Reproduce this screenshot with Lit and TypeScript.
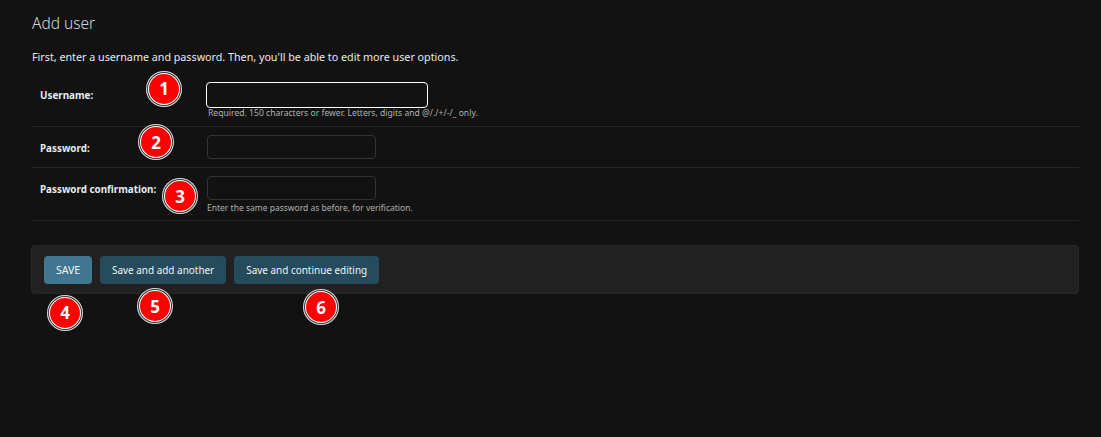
import { LitElement, html, css } from "lit";
import { customElement } from "lit/decorators.js";

const badges = [
  { n: 1, x: 164, y: 88.5 },
  { n: 2, x: 156, y: 142 },
  { n: 3, x: 180, y: 196 },
  { n: 4, x: 65, y: 312.5 },
  { n: 5, x: 155, y: 306 },
  { n: 6, x: 321, y: 307 },
];

@customElement("app-root")
export class AppRoot extends LitElement {
  static styles = css`
    :host {
      display: block;
      position: relative;
      height: 437px;
      overflow: hidden;
      background: #121212;
      color: #f5f5f5;
      font-family: "Noto Sans", "Open Sans", sans-serif;
      font-size: 11px;
    }
    .content {
      padding: 13px 22px 0 31px;
    }
    h1 {
      margin: 0 0 0 1px;
      font-size: 15.5px;
      line-height: 20px;
      font-weight: 300;
      color: #cfd8dc;
    }
    .intro {
      margin: 16px 0 0;
      padding-left: 1px;
      font-size: 10.72px;
      line-height: 16px;
      color: #e4ecf0;
    }
    .row {
      display: flex;
      padding: 8px 9px;
      border-bottom: 1px solid #262626;
    }
    .row.first {
      padding-top: 17px;
      padding-bottom: 7px;
    }
    .row.last {
      padding-bottom: 7px;
    }
    label {
      width: 167px;
      flex: none;
      font-size: 9.85px;
      font-weight: 700;
      color: #e4ecf0;
      line-height: 14px;
      padding-top: 6px;
    }
    .field {
      display: flex;
      flex-direction: column;
    }
    .input {
      width: 167px;
      height: 22px;
      border: 1px solid #333;
      border-radius: 4px;
      background: #121212;
    }
    .input.focus {
      width: 220px;
      height: 24px;
      margin-left: -1px;
      border-color: #fff;
    }
    .help {
      font-size: 8.5px;
      line-height: 11px;
      color: #b0b0b0;
      margin-top: 2px;
    }
    .help.wide {
      margin-top: 0;
      margin-left: 1px;
      font-size: 8.6px;
    }
    .bar {
      display: flex;
      gap: 8px;
      margin-top: 24px;
      padding: 10px 12px 9px;
      background: #212121;
      border: 1px solid #272727;
      border-radius: 4px;
    }
    button {
      height: 28px;
      border: 0;
      border-radius: 4px;
      padding: 0 12px;
      background: #264b5d;
      color: #f0f4f6;
      font: 9.95px "Noto Sans", "Open Sans", sans-serif;
    }
    button.save {
      background: #417690;
      width: 48px;
      padding: 0;
      font-size: 10.5px;
    }
    .badge {
      position: absolute;
      width: 30px;
      height: 30px;
      border-radius: 50%;
      background: #f00;
      color: #fff;
      font-size: 17px;
      font-weight: 700;
      display: flex;
      align-items: center;
      justify-content: center;
      box-shadow: 0 0 0 1px #fff, 0 0 0 2px #333, 0 0 0 3px #ddd;
      transform: translate(-15px, -15px);
    }
  `;

  render() {
    return html`
      <div class="content">
        <h1>Add user</h1>
        <p class="intro">First, enter a username and password. Then, you'll be able to edit more user options.</p>
        <div class="row first">
          <label>Username:</label>
          <div class="field">
            <div class="input focus"></div>
            <div class="help wide">Required. 150 characters or fewer. Letters, digits and @/./+/-/_ only.</div>
          </div>
        </div>
        <div class="row">
          <label>Password:</label>
          <div class="field"><div class="input"></div></div>
        </div>
        <div class="row last">
          <label>Password confirmation:</label>
          <div class="field">
            <div class="input"></div>
            <div class="help">Enter the same password as before, for verification.</div>
          </div>
        </div>
        <div class="bar">
          <button class="save">SAVE</button>
          <button>Save and add another</button>
          <button>Save and continue editing</button>
        </div>
      </div>
      ${badges.map(
        (b) => html`<div class="badge" style="left:${b.x}px;top:${b.y}px">${b.n}</div>`
      )}
    `;
  }
}
